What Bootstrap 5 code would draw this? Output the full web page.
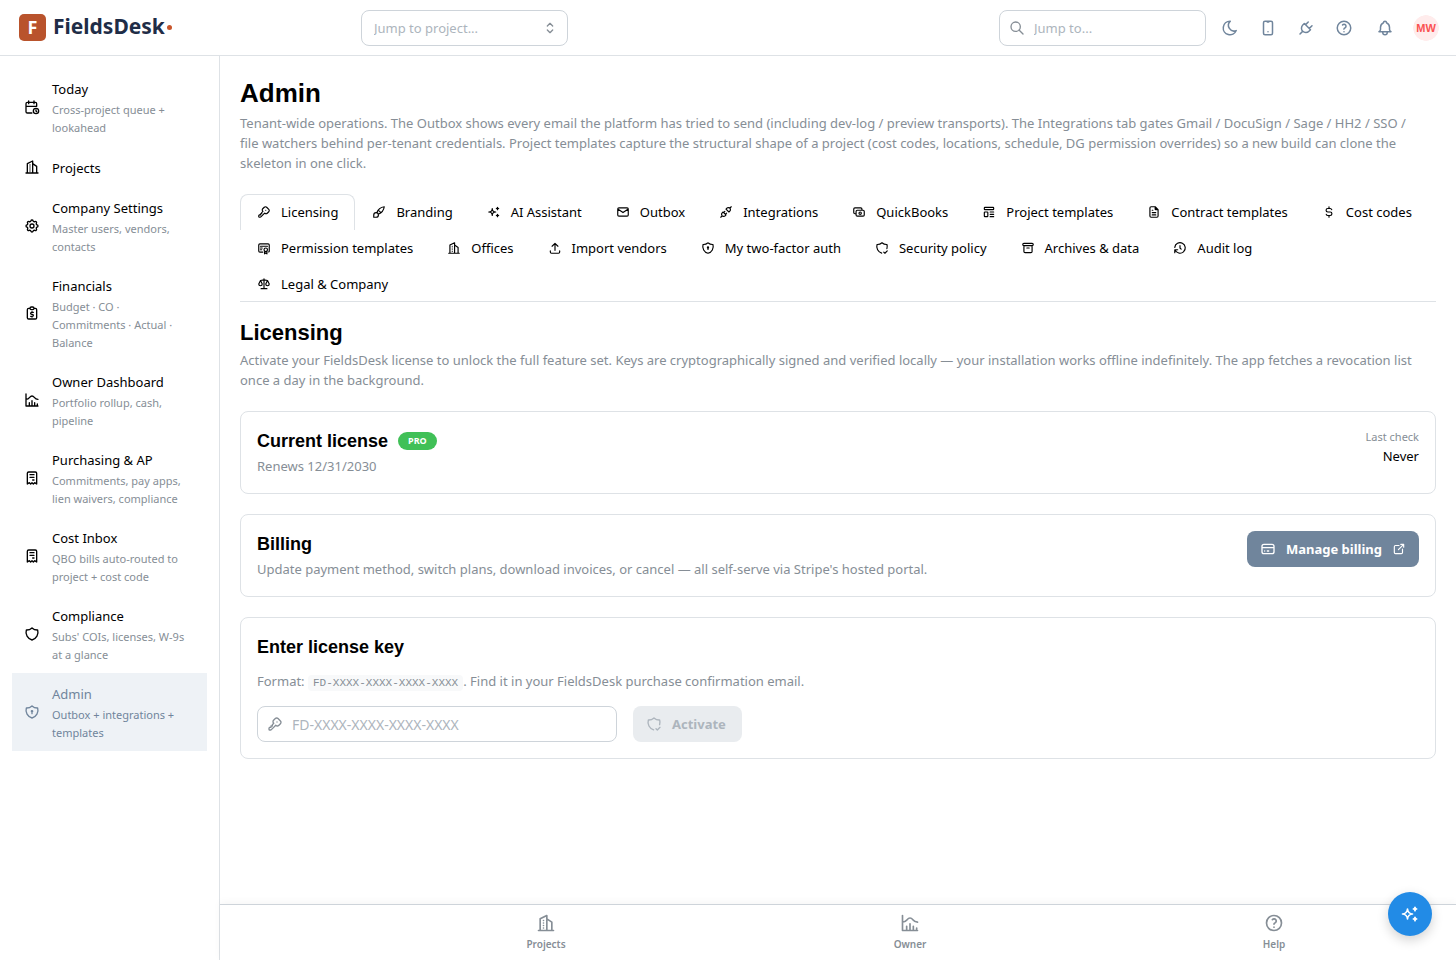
<!DOCTYPE html>
<html lang="en">
<head>
<meta charset="utf-8">
<meta name="viewport" content="width=device-width, initial-scale=1">
<title>Admin · FieldsDesk</title>
<link href="https://cdn.jsdelivr.net/npm/bootstrap@5.3.0/dist/css/bootstrap.min.css" rel="stylesheet">
<style>
  :root { --slate: #70859c; --dim: #868e96; --line: #dee2e6; --side: 220px; }
  body { font: 400 13px/20px "Noto Sans", sans-serif; color: #000; background: #fff; }
  h1, h2, h3 { font-family: "Liberation Sans", sans-serif; font-weight: 700; margin: 0; color: #000; }
  h1 { font-size: 26px; line-height: 34px; }
  h2 { font-size: 22px; line-height: 29px; }
  h3 { font-size: 18px; line-height: 26px; }
  .dim { color: var(--dim); }
  .intro { margin: 3px 0 0; padding-right: 16px; }
  .tiny { font-size: 11px; line-height: 18px; }
  .ico { width: 16px; height: 16px; flex: none; fill: none; stroke: currentColor; stroke-width: 2; stroke-linecap: round; stroke-linejoin: round; }
  .ico-sm { width: 14px; height: 14px; }
  .ico-md { width: 18px; height: 18px; }
  .ico-lg { width: 20px; height: 20px; }

  .topbar { height: 56px; border-bottom: 1px solid var(--line); padding: 0 16px; }
  .tools { gap: 10px; }
  .brand { flex: 0 0 345px; padding-left: 3px; gap: 7px; color: #1f2d47; font-size: 21px; font-weight: 700; line-height: 24px; }
  .brand-name { padding-bottom: 3px; }
  .brand-tile { width: 27px; height: 27px; border-radius: 5px; background: #b9532c; color: #fff; font-size: 18px; line-height: 26px; text-align: center; }
  .brand-dot { display: inline-block; width: 5px; height: 5px; border-radius: 50%; background: #c8552b; margin-left: 2px; vertical-align: 4px; }
  .field { position: relative; width: 207px; }
  .field .form-control, .field .form-select { height: 36px; padding: 0 12px; border: 1px solid #ced4da; border-radius: 8px; font-size: 13px; line-height: 20px; background: #fff; color: #000; }
  .field .form-select { color: #adb5bd; }
  .field .form-control { padding-left: 34px; }
  .field .form-control::placeholder { color: #adb5bd; }
  .field .ico { position: absolute; top: 10px; color: var(--dim); pointer-events: none; }
  .lead-ico { left: 10px; }
  .trail-ico { right: 10px; }
  .field.field-key { width: 360px; }
  .field-key .form-control { font-size: 14px; }
  .tool { width: 28px; height: 28px; padding: 0; border: 0; background: none; color: var(--slate); display: grid; place-items: center; }
  .tool-bell { width: 34px; }
  .avatar { width: 28px; height: 28px; padding: 0; border: 0; background: radial-gradient(circle, #ffecec 12.5px, transparent 13px); color: #fa5252; font: 700 11px/26px "Liberation Sans", sans-serif; }

  .sidebar { width: var(--side); flex: none; border-right: 1px solid var(--line); padding: 12px; }
  .side-link { display: flex; align-items: center; gap: 12px; padding: 10px 12px; min-height: 41px; color: #000; text-decoration: none; }
  .side-link > span { padding-top: 1px; margin-bottom: -1px; }
  .side-link .tiny { display: block; margin-top: 2px; color: var(--dim); }
  .side-link.active, .side-link.active .tiny { color: var(--slate); }
  .side-link.active { background: #eef2f6; }

  .content { padding: 20px; }
  .admin-tabs { margin: 21px 0 16px; padding-right: 4px; border: 0; box-shadow: inset 0 -1px var(--line); }
  .admin-tabs .nav-link { display: flex; align-items: center; gap: 10px; height: 36px; margin: 0; padding: 0 16px 2px; border: 1px solid transparent; border-bottom: 0; border-radius: 8px 8px 0 0; color: #000; }
  .admin-tabs .nav-link.active { border-color: var(--line); background: #fff; }
  .panels { gap: 20px; margin-top: 21px; }
  .panel { border: 1px solid var(--line); border-radius: 8px; padding: 16px; }
  .panel-title { gap: 10px; }
  .panel-note { margin: 2px 0 0; line-height: 21px; }
  .key-note { margin: 11px 0 13px; }
  .pill { border-radius: 9px; padding: 0 10px; background: #40c057; color: #fff; font-size: 9px; font-weight: 700; line-height: 18px; }
  .key-code { font-family: "Liberation Mono", monospace; font-size: 11px; color: var(--dim); background: #f8f9fa; padding: 2px 5px; border-radius: 4px; }
  .act { display: flex; align-items: center; gap: 10px; height: 36px; padding: 0 13px; border: 0; border-radius: 8px; font-size: 13px; font-weight: 700; background: var(--slate); color: #fff; }
  .act:disabled { background: #e9ecef; color: #adb5bd; padding-right: 16px; }

  .bottombar { position: sticky; bottom: 0; height: 56px; margin-top: auto; padding-left: calc(25vw - var(--side)); border-top: 1px solid #ced4da; background: #fff; box-shadow: 0 -2px 8px rgba(0,0,0,.04); }
  .bottombar a { flex: 1 1 0; display: flex; flex-direction: column; align-items: center; gap: 3px; padding-top: 8px; color: var(--dim); text-decoration: none; font-size: 10px; font-weight: 600; line-height: 16px; }
  .fab { position: fixed; right: 24px; bottom: 24px; width: 44px; height: 44px; border: 0; border-radius: 50%; background: #228be6; color: #fff; display: grid; place-items: center; box-shadow: 0 4px 12px rgba(0,0,0,.18); }
</style>
</head>
<body>
<svg class="d-none" aria-hidden="true">
  <symbol id="i-calendar" viewBox="0 0 24 24"><path d="M11.795 21h-6.795a2 2 0 0 1 -2 -2v-12a2 2 0 0 1 2 -2h12a2 2 0 0 1 2 2v4M14 18a4 4 0 1 0 8 0a4 4 0 1 0 -8 0M15 3v4M7 3v4M3 11h16M18 16.496v1.504l1 1"/></symbol>
  <symbol id="i-building" viewBox="0 0 24 24"><path d="M3 21h18M5 21v-14l8 -4v18M19 21v-10l-6 -4M9 9v.01M9 12v.01M9 15v.01M9 18v.01"/></symbol>
  <symbol id="i-settings" viewBox="0 0 24 24"><path d="M10.325 4.317c.426 -1.756 2.924 -1.756 3.35 0a1.724 1.724 0 0 0 2.573 1.066c1.543 -.94 3.31 .826 2.37 2.37a1.724 1.724 0 0 0 1.065 2.572c1.756 .426 1.756 2.924 0 3.35a1.724 1.724 0 0 0 -1.066 2.573c.94 1.543 -.826 3.31 -2.37 2.37a1.724 1.724 0 0 0 -2.572 1.065c-.426 1.756 -2.924 1.756 -3.35 0a1.724 1.724 0 0 0 -2.573 -1.066c-1.543 .94 -3.31 -.826 -2.37 -2.37a1.724 1.724 0 0 0 -1.065 -2.572c-1.756 -.426 -1.756 -2.924 0 -3.35a1.724 1.724 0 0 0 1.066 -2.573c-.94 -1.543 .826 -3.31 2.37 -2.37c1 .608 2.296 .07 2.572 -1.065zM9 12a3 3 0 1 0 6 0a3 3 0 0 0 -6 0"/></symbol>
  <symbol id="i-money" viewBox="0 0 24 24"><path d="M9 5h-2a2 2 0 0 0 -2 2v12a2 2 0 0 0 2 2h10a2 2 0 0 0 2 -2v-12a2 2 0 0 0 -2 -2h-2M9 5a2 2 0 0 1 2 -2h2a2 2 0 0 1 0 4h-2a2 2 0 0 1 -2 -2zM14 11h-2.5a1.5 1.5 0 0 0 0 3h1a1.5 1.5 0 0 1 0 3h-2.5M12 17v1m0 -8v1"/></symbol>
  <symbol id="i-chart" viewBox="0 0 24 24"><path d="M3 3v18h18M20 18v3M16 16v5M12 13v8M8 16v5M3 11c6 0 5 -5 9 -5s3 5 9 5"/></symbol>
  <symbol id="i-receipt" viewBox="0 0 24 24"><path d="M5 21v-16a2 2 0 0 1 2 -2h10a2 2 0 0 1 2 2v16l-3 -2l-2 2l-2 -2l-2 2l-2 -2l-3 2m4 -14h6m-6 4h6m-2 4h2"/></symbol>
  <symbol id="i-shield" viewBox="0 0 24 24"><path d="M12 3a12 12 0 0 0 8.5 3a12 12 0 0 1 -8.5 15a12 12 0 0 1 -8.5 -15a12 12 0 0 0 8.5 -3"/></symbol>
  <symbol id="i-shieldlock" viewBox="0 0 24 24"><path d="M12 3a12 12 0 0 0 8.5 3a12 12 0 0 1 -8.5 15a12 12 0 0 1 -8.5 -15a12 12 0 0 0 8.5 -3M11 11a1 1 0 1 0 2 0a1 1 0 1 0 -2 0M12 12v2.5"/></symbol>
  <symbol id="i-shieldcheck" viewBox="0 0 24 24"><path d="M11.46 20.846a12 12 0 0 1 -7.96 -14.846a12 12 0 0 0 8.5 -3a12 12 0 0 0 8.5 3a12 12 0 0 1 -.09 7.06M15 19l2 2l4 -4"/></symbol>
  <symbol id="i-key" viewBox="0 0 24 24"><path d="M16.555 3.843l3.602 3.602a2.877 2.877 0 0 1 0 4.069l-2.643 2.643a2.877 2.877 0 0 1 -4.069 0l-.301 -.301l-6.558 6.558a2 2 0 0 1 -1.239 .578l-.175 .008h-1.172a1 1 0 0 1 -.993 -.883l-.007 -.117v-1.172a2 2 0 0 1 .467 -1.284l.119 -.13l.414 -.414h2v-2h2v-2l2.144 -2.144l-.301 -.301a2.877 2.877 0 0 1 0 -4.069l2.643 -2.643a2.877 2.877 0 0 1 4.069 0zM15 9h.01"/></symbol>
  <symbol id="i-brush" viewBox="0 0 24 24"><path d="M3 21v-4a4 4 0 1 1 4 4h-4M21 3a16 16 0 0 0 -12.8 10.2M21 3a16 16 0 0 1 -10.2 12.8M10.6 9a9 9 0 0 1 4.4 4.4"/></symbol>
  <symbol id="i-sparkles" viewBox="0 0 24 24"><path d="M16 18a2 2 0 0 1 2 2a2 2 0 0 1 2 -2a2 2 0 0 1 -2 -2a2 2 0 0 1 -2 2zm0 -12a2 2 0 0 1 2 2a2 2 0 0 1 2 -2a2 2 0 0 1 -2 -2a2 2 0 0 1 -2 2zm-7 12a6 6 0 0 1 6 -6a6 6 0 0 1 -6 -6a6 6 0 0 1 -6 6a6 6 0 0 1 6 6z"/></symbol>
  <symbol id="i-mail" viewBox="0 0 24 24"><path d="M3 7a2 2 0 0 1 2 -2h14a2 2 0 0 1 2 2v10a2 2 0 0 1 -2 2h-14a2 2 0 0 1 -2 -2v-10zM3 7l9 6l9 -6"/></symbol>
  <symbol id="i-connected" viewBox="0 0 24 24"><path d="M7 12l5 5l-1.5 1.5a3.536 3.536 0 1 1 -5 -5l1.5 -1.5zM17 12l-5 -5l1.5 -1.5a3.536 3.536 0 1 1 5 5l-1.5 1.5zM3 21l2.5 -2.5M18.5 5.5l2.5 -2.5M10 11l-2 2M13 14l-2 2"/></symbol>
  <symbol id="i-cash" viewBox="0 0 24 24"><path d="M7 11a2 2 0 0 1 2 -2h10a2 2 0 0 1 2 2v6a2 2 0 0 1 -2 2h-10a2 2 0 0 1 -2 -2zM12 14a2 2 0 1 0 4 0a2 2 0 1 0 -4 0M17 9v-2a2 2 0 0 0 -2 -2h-10a2 2 0 0 0 -2 2v6a2 2 0 0 0 2 2h2"/></symbol>
  <symbol id="i-template" viewBox="0 0 24 24"><path d="M4 5a1 1 0 0 1 1 -1h14a1 1 0 0 1 1 1v2a1 1 0 0 1 -1 1h-14a1 1 0 0 1 -1 -1zM4 13a1 1 0 0 1 1 -1h4a1 1 0 0 1 1 1v6a1 1 0 0 1 -1 1h-4a1 1 0 0 1 -1 -1zM14 12h6M14 16h6M14 20h6"/></symbol>
  <symbol id="i-file" viewBox="0 0 24 24"><path d="M14 3v4a1 1 0 0 0 1 1h4M17 21h-10a2 2 0 0 1 -2 -2v-14a2 2 0 0 1 2 -2h7l5 5v11a2 2 0 0 1 -2 2zM9 9h1M9 13h6M9 17h6"/></symbol>
  <symbol id="i-dollar" viewBox="0 0 24 24"><path d="M16.7 8a3 3 0 0 0 -2.7 -2h-4a3 3 0 0 0 0 6h4a3 3 0 0 1 0 6h-4a3 3 0 0 1 -2.7 -2M12 3v3m0 12v3"/></symbol>
  <symbol id="i-certificate" viewBox="0 0 24 24"><path d="M12 15a3 3 0 1 0 6 0a3 3 0 1 0 -6 0M13 17.5v4.5l2 -1.5l2 1.5v-4.5M10 19h-5a2 2 0 0 1 -2 -2v-10c0 -1.1 .9 -2 2 -2h14a2 2 0 0 1 2 2v10a2 2 0 0 1 -1 1.73M6 9h12M6 12h3M6 15h2"/></symbol>
  <symbol id="i-upload" viewBox="0 0 24 24"><path d="M4 17v2a2 2 0 0 0 2 2h12a2 2 0 0 0 2 -2v-2M7 9l5 -5l5 5M12 4v12"/></symbol>
  <symbol id="i-archive" viewBox="0 0 24 24"><path d="M5 4h14a2 2 0 0 1 0 4h-14a2 2 0 0 1 0 -4zM5 8v10a2 2 0 0 0 2 2h10a2 2 0 0 0 2 -2v-10M10 12h4"/></symbol>
  <symbol id="i-history" viewBox="0 0 24 24"><path d="M12 8v4l2 2M3.05 11a9 9 0 1 1 .5 4m-.5 5v-5h5"/></symbol>
  <symbol id="i-scale" viewBox="0 0 24 24"><path d="M7 20h10M6 6l6 -1l6 1M12 3v17M9 12l-3 -6l-3 6a3 3 0 0 0 6 0M21 12l-3 -6l-3 6a3 3 0 0 0 6 0"/></symbol>
  <symbol id="i-selector" viewBox="0 0 24 24"><path d="M8 9l4 -4l4 4M16 15l-4 4l-4 -4"/></symbol>
  <symbol id="i-search" viewBox="0 0 24 24"><path d="M3 10a7 7 0 1 0 14 0a7 7 0 1 0 -14 0M21 21l-6 -6"/></symbol>
  <symbol id="i-moon" viewBox="0 0 24 24"><path d="M12 3h.393a7.5 7.5 0 0 0 7.92 12.446a9 9 0 1 1 -8.313 -12.454z"/></symbol>
  <symbol id="i-mobile" viewBox="0 0 24 24"><path d="M6 5a2 2 0 0 1 2 -2h8a2 2 0 0 1 2 2v14a2 2 0 0 1 -2 2h-8a2 2 0 0 1 -2 -2v-14zM11 4h2M12 17v.01"/></symbol>
  <symbol id="i-plug" viewBox="0 0 24 24"><path d="M9.785 6l8.215 8.215l-2.054 2.054a5.81 5.81 0 1 1 -8.215 -8.215l2.054 -2.054zM4 20l3.5 -3.5M15 4l-3.5 3.5M20 9l-3.5 3.5"/></symbol>
  <symbol id="i-help" viewBox="0 0 24 24"><path d="M3 12a9 9 0 1 0 18 0a9 9 0 1 0 -18 0M12 17v.01M12 13.5a1.5 1.5 0 0 1 1 -1.5a2.6 2.6 0 1 0 -3 -4"/></symbol>
  <symbol id="i-bell" viewBox="0 0 24 24"><path d="M10 5a2 2 0 1 1 4 0a7 7 0 0 1 4 6v3a4 4 0 0 0 2 3h-16a4 4 0 0 0 2 -3v-3a7 7 0 0 1 4 -6M9 17v1a3 3 0 0 0 6 0v-1"/></symbol>
  <symbol id="i-card" viewBox="0 0 24 24"><path d="M3 8a3 3 0 0 1 3 -3h12a3 3 0 0 1 3 3v8a3 3 0 0 1 -3 3h-12a3 3 0 0 1 -3 -3zM3 10h18M7 15h.01M11 15h2"/></symbol>
  <symbol id="i-external" viewBox="0 0 24 24"><path d="M12 6h-6a2 2 0 0 0 -2 2v10a2 2 0 0 0 2 2h10a2 2 0 0 0 2 -2v-6M11 13l9 -9M15 4h5v5"/></symbol>
</svg>

<div class="d-flex flex-column min-vh-100">
  <header class="topbar d-flex align-items-center">
    <div class="brand d-flex align-items-center">
      <span class="brand-tile">F</span>
      <span class="brand-name">FieldsDesk<i class="brand-dot"></i></span>
    </div>
    <div class="field">
      <select class="form-select" aria-label="Jump to project"><option>Jump to project...</option></select>
      <svg class="ico trail-ico"><use href="#i-selector"/></svg>
    </div>
    <div class="tools d-flex align-items-center ms-auto">
      <div class="field">
        <svg class="ico lead-ico"><use href="#i-search"/></svg>
        <input class="form-control" type="search" placeholder="Jump to..." aria-label="Jump to">
      </div>
      <button class="tool" type="button" aria-label="Dark mode"><svg class="ico ico-md"><use href="#i-moon"/></svg></button>
      <button class="tool" type="button" aria-label="Mobile"><svg class="ico ico-md"><use href="#i-mobile"/></svg></button>
      <button class="tool" type="button" aria-label="Connections"><svg class="ico ico-md"><use href="#i-plug"/></svg></button>
      <button class="tool" type="button" aria-label="Help"><svg class="ico ico-md"><use href="#i-help"/></svg></button>
      <button class="tool tool-bell" type="button" aria-label="Notifications"><svg class="ico ico-md"><use href="#i-bell"/></svg></button>
      <button class="avatar" type="button">MW</button>
    </div>
  </header>

  <div class="d-flex flex-grow-1">
    <nav class="sidebar" aria-label="Main">
      <a class="side-link" href="#"><svg class="ico"><use href="#i-calendar"/></svg><span>Today<span class="tiny">Cross-project queue + lookahead</span></span></a>
      <a class="side-link" href="#"><svg class="ico"><use href="#i-building"/></svg><span>Projects</span></a>
      <a class="side-link" href="#"><svg class="ico"><use href="#i-settings"/></svg><span>Company Settings<span class="tiny">Master users, vendors, contacts</span></span></a>
      <a class="side-link" href="#"><svg class="ico"><use href="#i-money"/></svg><span>Financials<span class="tiny">Budget · CO · Commitments · Actual · Balance</span></span></a>
      <a class="side-link" href="#"><svg class="ico"><use href="#i-chart"/></svg><span>Owner Dashboard<span class="tiny">Portfolio rollup, cash, pipeline</span></span></a>
      <a class="side-link" href="#"><svg class="ico"><use href="#i-receipt"/></svg><span>Purchasing &amp; AP<span class="tiny">Commitments, pay apps, lien waivers, compliance</span></span></a>
      <a class="side-link" href="#"><svg class="ico"><use href="#i-receipt"/></svg><span>Cost Inbox<span class="tiny">QBO bills auto-routed to project + cost code</span></span></a>
      <a class="side-link" href="#"><svg class="ico"><use href="#i-shield"/></svg><span>Compliance<span class="tiny">Subs' COIs, licenses, W-9s at a glance</span></span></a>
      <a class="side-link active" href="#" aria-current="page"><svg class="ico"><use href="#i-shieldlock"/></svg><span>Admin<span class="tiny">Outbox + integrations + templates</span></span></a>
    </nav>

    <div class="d-flex flex-column flex-grow-1 w-100">
      <main class="content">
        <h1>Admin</h1>
        <p class="dim intro">Tenant-wide operations. The Outbox shows every email the platform has tried to send (including dev-log / preview transports). The Integrations tab gates Gmail / DocuSign / Sage / HH2 / SSO / file watchers behind per-tenant credentials. Project templates capture the structural shape of a project (cost codes, locations, schedule, DG permission overrides) so a new build can clone the skeleton in one click.</p>

        <div class="nav nav-tabs admin-tabs" role="tablist">
          <button class="nav-link active" role="tab" aria-selected="true"><svg class="ico ico-sm"><use href="#i-key"/></svg>Licensing</button>
          <button class="nav-link" role="tab"><svg class="ico ico-sm"><use href="#i-brush"/></svg>Branding</button>
          <button class="nav-link" role="tab"><svg class="ico ico-sm"><use href="#i-sparkles"/></svg>AI Assistant</button>
          <button class="nav-link" role="tab"><svg class="ico ico-sm"><use href="#i-mail"/></svg>Outbox</button>
          <button class="nav-link" role="tab"><svg class="ico ico-sm"><use href="#i-connected"/></svg>Integrations</button>
          <button class="nav-link" role="tab"><svg class="ico ico-sm"><use href="#i-cash"/></svg>QuickBooks</button>
          <button class="nav-link" role="tab"><svg class="ico ico-sm"><use href="#i-template"/></svg>Project templates</button>
          <button class="nav-link" role="tab"><svg class="ico ico-sm"><use href="#i-file"/></svg>Contract templates</button>
          <button class="nav-link" role="tab"><svg class="ico ico-sm"><use href="#i-dollar"/></svg>Cost codes</button>
          <button class="nav-link" role="tab"><svg class="ico ico-sm"><use href="#i-certificate"/></svg>Permission templates</button>
          <button class="nav-link" role="tab"><svg class="ico ico-sm"><use href="#i-building"/></svg>Offices</button>
          <button class="nav-link" role="tab"><svg class="ico ico-sm"><use href="#i-upload"/></svg>Import vendors</button>
          <button class="nav-link" role="tab"><svg class="ico ico-sm"><use href="#i-shieldlock"/></svg>My two-factor auth</button>
          <button class="nav-link" role="tab"><svg class="ico ico-sm"><use href="#i-shieldcheck"/></svg>Security policy</button>
          <button class="nav-link" role="tab"><svg class="ico ico-sm"><use href="#i-archive"/></svg>Archives &amp; data</button>
          <button class="nav-link" role="tab"><svg class="ico ico-sm"><use href="#i-history"/></svg>Audit log</button>
          <button class="nav-link" role="tab"><svg class="ico ico-sm"><use href="#i-scale"/></svg>Legal &amp; Company</button>
        </div>

        <h2>Licensing</h2>
        <p class="dim intro">Activate your FieldsDesk license to unlock the full feature set. Keys are cryptographically signed and verified locally — your installation works offline indefinitely. The app fetches a revocation list once a day in the background.</p>

        <div class="panels d-flex flex-column">
          <section class="panel d-flex justify-content-between align-items-start">
            <div>
              <div class="panel-title d-flex align-items-center"><h3>Current license</h3><span class="pill">PRO</span></div>
              <p class="panel-note dim">Renews 12/31/2030</p>
            </div>
            <div class="text-end"><div class="tiny dim">Last check</div><div>Never</div></div>
          </section>

          <section class="panel d-flex justify-content-between align-items-start">
            <div>
              <h3>Billing</h3>
              <p class="panel-note dim">Update payment method, switch plans, download invoices, or cancel — all self-serve via Stripe's hosted portal.</p>
            </div>
            <button class="act" type="button"><svg class="ico"><use href="#i-card"/></svg>Manage billing<svg class="ico ico-sm"><use href="#i-external"/></svg></button>
          </section>

          <section class="panel">
            <h3>Enter license key</h3>
            <p class="dim key-note">Format: <code class="key-code">FD-XXXX-XXXX-XXXX-XXXX</code>. Find it in your FieldsDesk purchase confirmation email.</p>
            <div class="d-flex gap-3">
              <div class="field field-key">
                <svg class="ico lead-ico"><use href="#i-key"/></svg>
                <input class="form-control" type="text" placeholder="FD-XXXX-XXXX-XXXX-XXXX" aria-label="License key">
              </div>
              <button class="act" type="button" disabled><svg class="ico"><use href="#i-shieldcheck"/></svg>Activate</button>
            </div>
          </section>
        </div>
      </main>

      <nav class="bottombar d-flex" aria-label="Quick links">
        <a href="#"><svg class="ico ico-lg"><use href="#i-building"/></svg>Projects</a>
        <a href="#"><svg class="ico ico-lg"><use href="#i-chart"/></svg>Owner</a>
        <a href="#"><svg class="ico ico-lg"><use href="#i-help"/></svg>Help</a>
      </nav>
    </div>
  </div>
</div>
<button class="fab" type="button" aria-label="Assistant"><svg class="ico ico-lg"><use href="#i-sparkles"/></svg></button>
<script src="https://cdn.jsdelivr.net/npm/bootstrap@5.3.0/dist/js/bootstrap.bundle.min.js"></script>
</body>
</html>
